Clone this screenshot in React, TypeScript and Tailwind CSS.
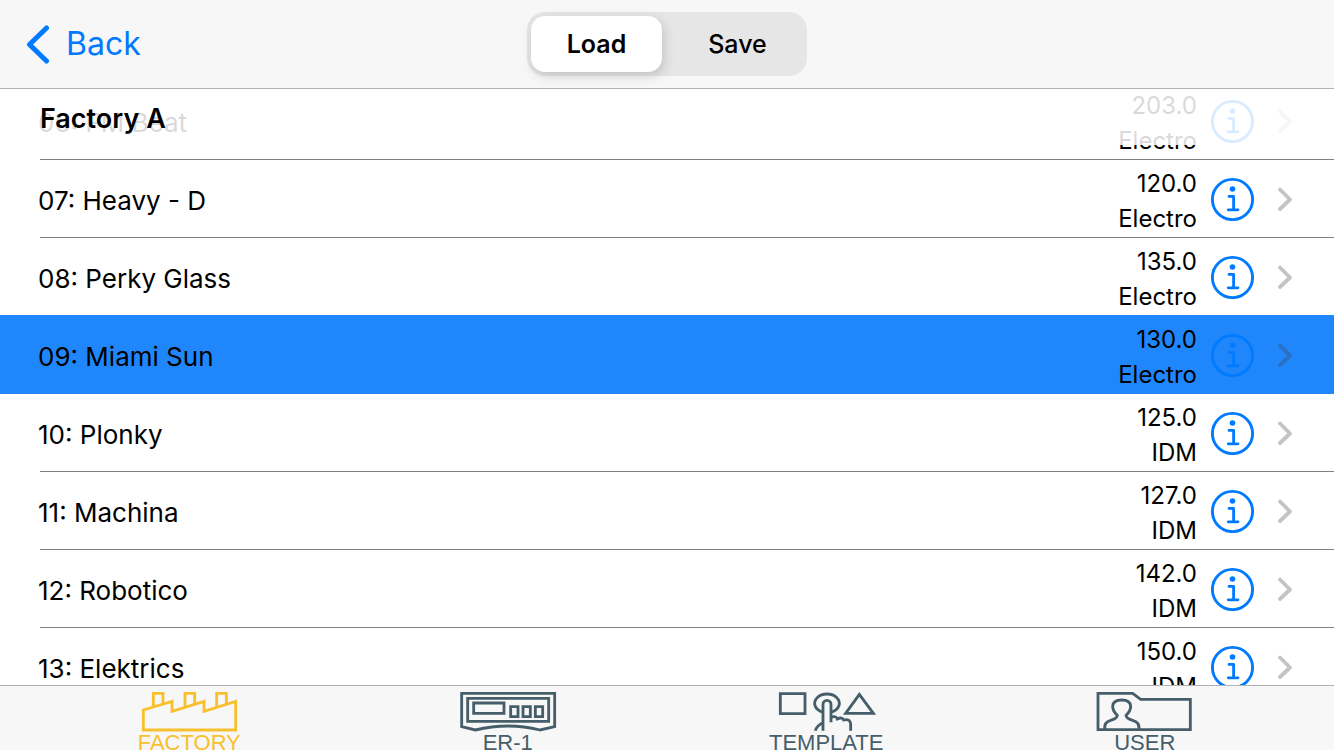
import { useState } from "react";
import type { ReactNode } from "react";

type Pattern = { id: string; name: string; tempo: string; genre: string };
type Tab = { label: string; icon: ReactNode };

const patterns: Pattern[] = [
  { id: "06", name: "FM Beat", tempo: "203.0", genre: "Electro" },
  { id: "07", name: "Heavy - D", tempo: "120.0", genre: "Electro" },
  { id: "08", name: "Perky Glass", tempo: "135.0", genre: "Electro" },
  { id: "09", name: "Miami Sun", tempo: "130.0", genre: "Electro" },
  { id: "10", name: "Plonky", tempo: "125.0", genre: "IDM" },
  { id: "11", name: "Machina", tempo: "127.0", genre: "IDM" },
  { id: "12", name: "Robotico", tempo: "142.0", genre: "IDM" },
  { id: "13", name: "Elektrics", tempo: "150.0", genre: "IDM" },
];

const iconProps = {
  className: "h-[42px] w-[100px] shrink-0",
  fill: "none",
  stroke: "currentColor",
  strokeWidth: 8.5,
  "aria-hidden": true,
};

const FactoryIcon = () => (
  <svg {...iconProps} viewBox="88 30 300 126">
    <path d="M101 150V90L187 64V94L283 64V94L378 64V150Z" />
    <path d="M131 80V40H160V71M226 80V40H255V71M321 80V40H350V71" />
  </svg>
);

const SynthIcon = () => (
  <svg {...iconProps} viewBox="54 30 300 126">
    <path d="M65 40H344V140L300 150Q252 138 204 138T106 150L65 140Z" />
    <path d="M83 55H326V124H83Z" />
    <path d="M101 69H192V100H101ZM212 80H234V110H212ZM249 80H271V110H249ZM286 80H308V110H286Z" />
  </svg>
);

const TemplateIcon = () => (
  <svg {...iconProps} viewBox="108 30 300 126">
    <path d="M121 41H195V101H121Z" />
    <path d="M358 43L400 100H317Z" />
    <path d="M247 96A37 28 0 1 1 275 96" />
    <path d="M226 152Q228 140 249 127M249 152V73A12 12 0 0 1 273 73V127M273 112Q288 106 292 117Q306 110 311 120Q331 115 332 132V152" />
  </svg>
);

const UserIcon = () => (
  <svg {...iconProps} viewBox="45 180 300 126">
    <path d="M54 190H158L182 208H331V299H54Z" />
    <path d="M74 298Q72 276 92 271Q112 266 112 256Q98 244 98 229Q99 210 125 210Q151 210 152 229Q152 244 138 256Q138 266 158 271Q179 276 177 298" />
  </svg>
);

const tabs: Tab[] = [
  { label: "FACTORY", icon: <FactoryIcon /> },
  { label: "ER-1", icon: <SynthIcon /> },
  { label: "TEMPLATE", icon: <TemplateIcon /> },
  { label: "USER", icon: <UserIcon /> },
];

function PatternRow({ pattern, selected, onSelect }: { pattern: Pattern; selected: boolean; onSelect: () => void }) {
  return (
    <li className={selected ? "relative -mt-px bg-[#1f87fb] pt-px" : ""}>
      <div className="flex h-[77px] items-center pr-[41px] pl-[38px]">
        <button type="button" onClick={onSelect} className="flex min-w-0 flex-1 items-center justify-between pt-1 text-left">
          <span className="text-[26px]">
            {pattern.id}: {pattern.name}
          </span>
          <span className="text-right text-2xl leading-[35px]">
            <span className="block">{pattern.tempo}</span>
            <span className="block">{pattern.genre}</span>
          </span>
        </button>
        <button type="button" aria-label={`Details of ${pattern.name}`} className="ml-3.5 text-[#007aff]">
          <svg className="size-11" viewBox="0 0 44 44" fill="none" stroke="currentColor" aria-hidden="true">
            <circle cx="21.5" cy="22.5" r="20.1" strokeWidth="2.9" />
            <circle cx="21.5" cy="12" r="2.8" fill="currentColor" stroke="none" />
            <path d="M18 19.4H22.6V32.6M17.2 32.8H27" strokeWidth="2.8" strokeLinecap="round" strokeLinejoin="round" />
          </svg>
        </button>
        <svg
          className={selected ? "ml-[22px] h-6 w-4 text-[#2b70c3]" : "ml-[22px] h-6 w-4 text-[#c4c4c6]"}
          viewBox="0 0 16 24"
          fill="none"
          stroke="currentColor"
          strokeWidth="3.8"
          strokeLinecap="round"
          strokeLinejoin="round"
          aria-hidden="true"
        >
          <path d="M3 2.5L13 12.5L3 22" />
        </svg>
      </div>
      <div className={selected ? "h-px" : "ml-10 h-px bg-[#7f7f82]"} />
    </li>
  );
}

export default function App() {
  const [mode, setMode] = useState("Load");
  const [selected, setSelected] = useState("09");
  const [tab, setTab] = useState("FACTORY");

  return (
    <div className="flex h-screen flex-col overflow-hidden bg-white font-['Inter',sans-serif] text-black">
      <header className="grid shrink-0 grid-cols-[1fr_auto_1fr] items-center border-b border-[#b2b2b4] bg-[#f7f7f7] py-3">
        <button type="button" className="flex items-center gap-[17px] justify-self-start pl-[25px] text-[32px] leading-10 text-[#007aff]">
          <svg className="h-10 w-6" viewBox="0 0 24 40" fill="none" stroke="currentColor" strokeWidth="5" strokeLinecap="round" strokeLinejoin="round" aria-hidden="true">
            <path d="M21.5 4L4.5 20.5L21.5 37" />
          </svg>
          Back
        </button>
        <div className="flex h-16 w-[280px] gap-2.5 rounded-[18px] bg-[#e6e6e7] p-1 text-[25px]">
          {["Load", "Save"].map((name) => (
            <button
              key={name}
              type="button"
              aria-pressed={mode === name}
              onClick={() => setMode(name)}
              className={
                mode === name
                  ? "flex-1 rounded-[14px] bg-white pt-0.5 font-semibold shadow-[2px_4px_12px_rgba(0,0,0,0.16)]"
                  : "flex-1 rounded-[14px] pt-0.5 font-medium"
              }
            >
              {name}
            </button>
          ))}
        </div>
      </header>

      <main className="relative min-h-0 flex-1 overflow-hidden">
        <h2 className="absolute inset-x-0 top-0 z-10 bg-white/85 pt-3 pb-2 pl-10 text-[27px] leading-9 font-semibold">Factory A</h2>
        <ul className="-mt-[7px]">
          {patterns.map((pattern) => (
            <PatternRow
              key={pattern.id}
              pattern={pattern}
              selected={selected === pattern.id}
              onSelect={() => setSelected(pattern.id)}
            />
          ))}
        </ul>
      </main>

      <nav className="grid h-[65px] shrink-0 grid-cols-4 overflow-hidden border-t border-[#b2b2b4] bg-[#f7f7f8] px-[30px] pt-1">
        {tabs.map(({ label, icon }) => (
          <button
            key={label}
            type="button"
            aria-pressed={tab === label}
            onClick={() => setTab(label)}
            className={
              tab === label
                ? "flex flex-col items-center font-['Liberation_Sans',sans-serif] text-[22px] leading-[22px] text-[#f7c02c]"
                : "flex flex-col items-center font-['Liberation_Sans',sans-serif] text-[22px] leading-[22px] text-[#455e69]"
            }
          >
            {icon}
            {label}
          </button>
        ))}
      </nav>
    </div>
  );
}
